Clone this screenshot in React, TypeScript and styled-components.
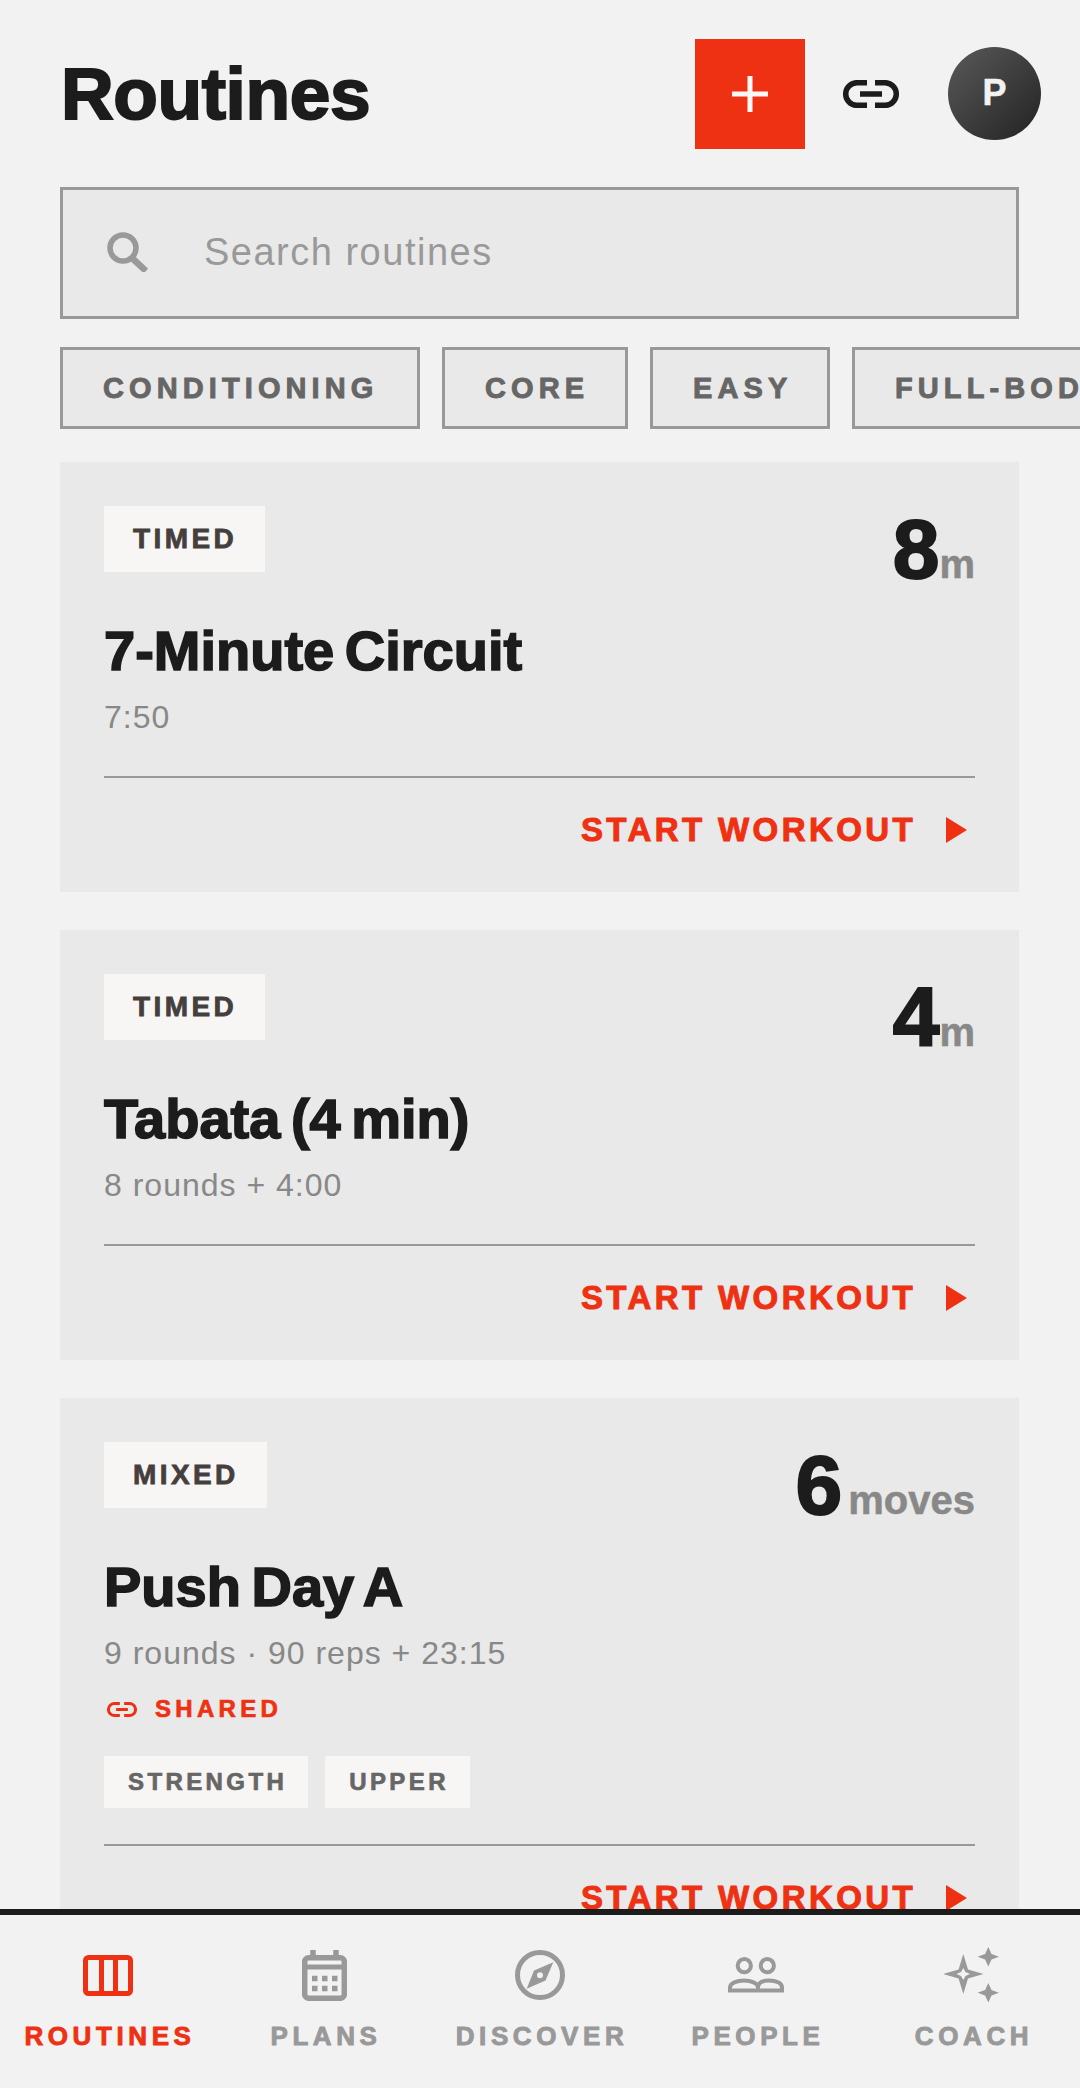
import React from 'react';
import styled, { createGlobalStyle } from 'styled-components';

const RED = '#ee3112';
const INK = '#1c1c1c';
const BOLD = `"Liberation Sans", Arial, sans-serif`;

const GlobalStyle = createGlobalStyle`
  html, body {
    margin: 0;
    padding: 0;
    background: #f2f2f2;
  }
  * {
    box-sizing: border-box;
  }
`;

const Page = styled.div`
  width: 1080px;
  height: 2088px;
  display: flex;
  flex-direction: column;
  overflow: hidden;
  background: #f2f2f2;
  font-family: ${BOLD};
  color: ${INK};
`;

const Scroll = styled.main`
  flex: 1;
  min-height: 0;
  overflow: hidden;
`;

const Header = styled.header`
  display: flex;
  align-items: center;
  height: 110px;
  margin-top: 39px;
  padding: 0 39px 0 61px;
`;

const Title = styled.h1`
  flex: 1;
  margin: -2px 0 0;
  font-size: 73px;
  font-weight: 700;
  letter-spacing: -0.4px;
  -webkit-text-stroke: 2px ${INK};
`;

const AddButton = styled.button`
  width: 110px;
  height: 110px;
  display: flex;
  align-items: center;
  justify-content: center;
  border: 0;
  padding: 0;
  background: ${RED};
`;

const LinkButton = styled.div`
  display: flex;
  margin: 0 49px 0 38px;
  color: ${INK};
`;

const Avatar = styled.div`
  width: 93px;
  height: 93px;
  margin-bottom: 2px;
  display: flex;
  align-items: center;
  justify-content: center;
  border-radius: 50%;
  background: linear-gradient(135deg, #5a5a5a, #222);
  color: #f2f2f2;
  font-size: 36px;
  font-weight: 700;
  -webkit-text-stroke: 0.5px #f2f2f2;
`;

const SearchBox = styled.div`
  display: flex;
  align-items: center;
  height: 132px;
  margin: 38px 61px 0 60px;
  padding: 0 0 2px 44px;
  border: 3px solid #999;
  background: #e9e9e9;
  color: #999;
`;

const Placeholder = styled.span`
  margin-left: 56px;
  font-size: 38px;
  letter-spacing: 1.5px;
`;

const Chips = styled.div`
  display: flex;
  gap: 22px;
  margin-top: 28px;
  padding-left: 60px;
  white-space: nowrap;
`;

const Chip = styled.div<{ $width?: number }>`
  flex: none;
  width: ${(p) => (p.$width ? `${p.$width}px` : 'auto')};
  height: 82px;
  display: flex;
  align-items: center;
  padding-left: 40px;
  border: 3px solid #999;
  background: #e9e9e9;
  color: #666;
  font-size: 29px;
  font-weight: 700;
  letter-spacing: 5.1px;
  -webkit-text-stroke: 0.9px #666;
`;

const Cards = styled.div`
  display: flex;
  flex-direction: column;
  gap: 38px;
  margin: 33px 61px 0 60px;
`;

const Card = styled.article`
  padding: 44px 44px 0;
  background: #e9e9e9;
`;

const CardTop = styled.div`
  display: flex;
  justify-content: space-between;
  align-items: flex-start;
  height: 82px;
`;

const Kind = styled.span`
  height: 66px;
  display: flex;
  align-items: center;
  padding: 0 28px 0 29px;
  background: #f8f6f5;
  color: #443f3d;
  font-size: 28px;
  font-weight: 700;
  letter-spacing: 3.4px;
  -webkit-text-stroke: 0.8px #443f3d;
`;

const Stat = styled.div`
  display: flex;
  align-items: baseline;
  margin-top: 4px;
  line-height: 78px;
`;

const StatNum = styled.span`
  font-size: 84px;
  font-weight: 700;
  -webkit-text-stroke: 2px ${INK};
`;

const StatUnit = styled.span<{ $gap: number }>`
  margin-left: ${(p) => p.$gap}px;
  color: #888;
  font-size: 40px;
  font-weight: 700;
  -webkit-text-stroke: 0.5px #888;
`;

const CardTitle = styled.h2`
  margin: 31px 0 0;
  font-size: 56px;
  line-height: 64px;
  font-weight: 700;
  letter-spacing: 0;
  word-spacing: -5px;
  -webkit-text-stroke: 1.6px ${INK};
`;

const Meta = styled.div`
  margin-top: 15px;
  color: #888;
  font-size: 32px;
  line-height: 38px;
  letter-spacing: 1px;
`;

const Shared = styled.div`
  display: flex;
  align-items: center;
  gap: 18px;
  margin-top: 22px;
  padding-left: 3px;
  color: ${RED};
  font-size: 24px;
  line-height: 30px;
  font-weight: 700;
  letter-spacing: 4.3px;
  -webkit-text-stroke: 0.7px ${RED};
`;

const Tags = styled.div`
  display: flex;
  gap: 17px;
  margin: 32px 0 -4px;
`;

const Tag = styled.span`
  height: 52px;
  display: flex;
  align-items: center;
  padding: 0 21px 0 24px;
  background: #f8f6f5;
  color: #666;
  font-size: 24px;
  font-weight: 700;
  letter-spacing: 3.4px;
  -webkit-text-stroke: 0.7px #666;
`;

const CardFoot = styled.div`
  display: flex;
  align-items: center;
  justify-content: flex-end;
  height: 116px;
  margin-top: 40px;
  padding: 0 8px 10px 0;
  border-top: 2px solid #999;
  color: ${RED};
  font-size: 33px;
  font-weight: 700;
  letter-spacing: 3.4px;
  -webkit-text-stroke: 1px ${RED};
`;

const Arrow = styled.svg`
  margin-left: 30px;
`;

const Nav = styled.nav`
  flex: none;
  height: 179px;
  display: grid;
  grid-template-columns: repeat(5, 1fr);
  border-top: 6px solid ${INK};
  background: #f2f2f2;
`;

const NavItem = styled.div<{ $active?: boolean }>`
  display: flex;
  flex-direction: column;
  align-items: center;
  padding-top: 30px;
  color: ${(p) => (p.$active ? RED : '#999')};
`;

const NavIcon = styled.div`
  height: 60px;
  display: flex;
  align-items: center;
  justify-content: center;
`;

const NavLabel = styled.span`
  margin-top: 16px;
  padding-left: 4px;
  font-size: 26px;
  line-height: 30px;
  font-weight: 700;
  letter-spacing: 4.6px;
  -webkit-text-stroke: 0.9px currentColor;
`;

const LinkIcon = ({ width }: { width: number }) => (
  <svg width={width} height={width / 2} viewBox="0 0 56 28" fill="none" stroke="currentColor" strokeWidth="5.5">
    <path d="M24 2.7H14a11.3 11.3 0 0 0 0 22.6H24" />
    <path d="M32 2.7H42a11.3 11.3 0 0 1 0 22.6H32" />
    <path d="M17 14H39" />
  </svg>
);

const PlusIcon = () => (
  <svg width="36" height="36" viewBox="0 0 36 36" stroke="#fbf7f5" strokeWidth="5">
    <path d="M18 0v36M0 18h36" />
  </svg>
);

const SearchIcon = () => (
  <svg width="41" height="40" viewBox="0 0 41 40" fill="none" stroke="currentColor" strokeWidth="5.5">
    <circle cx="16" cy="16" r="13" />
    <path d="M25 26l14 13" strokeWidth="6.5" />
  </svg>
);

const RoutinesIcon = () => (
  <svg width="50" height="41" viewBox="0 0 50 41" fill="none" stroke="currentColor" strokeWidth="5">
    <rect x="2.5" y="2.5" width="45" height="36" rx="3" />
    <path d="M18.5 2v37M32.5 2v37" />
  </svg>
);

const PlansIcon = () => (
  <svg width="45" height="51" viewBox="0 0 45 51" fill="none" stroke="currentColor" strokeWidth="5.5">
    <rect x="2.7" y="7.7" width="39.6" height="40.6" rx="4" />
    <path d="M11 0v6M34 0v6" />
    <path d="M2 17h41" strokeWidth="5" />
    <path d="M10 28.5h5.5M20 28.5h5.5M30 28.5h5.5M10 38.5h5.5M20 38.5h5.5M30 38.5h5.5" />
  </svg>
);

const DiscoverIcon = () => (
  <svg width="50" height="50" viewBox="0 0 50 50" fill="none" stroke="currentColor" strokeWidth="5">
    <circle cx="25" cy="25" r="22.5" />
    <path d="M38.3 12.2L30.5 30.5L11.7 38.8L19 20.5z" fill="currentColor" stroke="none" />
    <circle cx="25" cy="25.3" r="3" fill="#f2f2f2" stroke="none" />
  </svg>
);

const PeopleIcon = () => (
  <svg width="56" height="36" viewBox="0 0 56 36" fill="none" stroke="currentColor" strokeWidth="4">
    <circle cx="16.3" cy="8.7" r="6.6" />
    <circle cx="39.3" cy="8.7" r="6.6" />
    <path d="M2 33.5v-3C2 26 9 23.5 16 23.5S30 26 30 30.5v3" />
    <path d="M30 30.5C30 26 34 23.5 41 23.5S54 26 54 30.5v3" />
    <path d="M0 33.5H56" />
  </svg>
);

const CoachIcon = () => (
  <svg width="56" height="56" viewBox="0 0 56 56" fill="currentColor">
    <path
      fillRule="evenodd"
      d="M19.3 7L24 22.5L39.5 27L24 31.5L19.3 47L14.6 31.5L-0.5 27L14.6 22.5ZM19.3 21L21.5 25L26 27L21.5 29L19.3 33L17 29L12.5 27L17 25Z"
    />
    <path d="M44.3 0L47.5 7L55 9.7L47.5 12.4L44.3 19.4L41.1 12.4L33.6 9.7L41.1 7Z" />
    <path d="M44.3 36L47.5 43L55 45.7L47.5 48.4L44.3 55.4L41.1 48.4L33.6 45.7L41.1 43Z" />
  </svg>
);

type Routine = {
  kind: string;
  num: string;
  unit: string;
  unitGap: number;
  title: string;
  meta: string;
  shared?: boolean;
  tags?: string[];
};

const chips = [
  { label: 'CONDITIONING', width: 360 },
  { label: 'CORE', width: 186 },
  { label: 'EASY', width: 180 },
  { label: 'FULL-BODY' },
];

const routines: Routine[] = [
  { kind: 'TIMED', num: '8', unit: 'm', unitGap: 0, title: '7-Minute Circuit', meta: '7:50' },
  { kind: 'TIMED', num: '4', unit: 'm', unitGap: 0, title: 'Tabata (4 min)', meta: '8 rounds + 4:00' },
  {
    kind: 'MIXED',
    num: '6',
    unit: 'moves',
    unitGap: 6,
    title: 'Push Day A',
    meta: '9 rounds · 90 reps + 23:15',
    shared: true,
    tags: ['STRENGTH', 'UPPER'],
  },
];

const tabs = [
  { label: 'ROUTINES', icon: <RoutinesIcon />, active: true },
  { label: 'PLANS', icon: <PlansIcon /> },
  { label: 'DISCOVER', icon: <DiscoverIcon /> },
  { label: 'PEOPLE', icon: <PeopleIcon /> },
  { label: 'COACH', icon: <CoachIcon /> },
];

export default function App() {
  return (
    <Page>
      <GlobalStyle />
      <Scroll>
        <Header>
          <Title>Routines</Title>
          <AddButton>
            <PlusIcon />
          </AddButton>
          <LinkButton>
            <LinkIcon width={56} />
          </LinkButton>
          <Avatar>P</Avatar>
        </Header>

        <SearchBox>
          <SearchIcon />
          <Placeholder>Search routines</Placeholder>
        </SearchBox>

        <Chips>
          {chips.map((c) => (
            <Chip key={c.label} $width={c.width}>
              {c.label}
            </Chip>
          ))}
        </Chips>

        <Cards>
          {routines.map((r) => (
            <Card key={r.title}>
              <CardTop>
                <Kind>{r.kind}</Kind>
                <Stat>
                  <StatNum>{r.num}</StatNum>
                  <StatUnit $gap={r.unitGap}>{r.unit}</StatUnit>
                </Stat>
              </CardTop>
              <CardTitle>{r.title}</CardTitle>
              <Meta>{r.meta}</Meta>
              {r.shared && (
                <Shared>
                  <LinkIcon width={30} />
                  SHARED
                </Shared>
              )}
              {r.tags && (
                <Tags>
                  {r.tags.map((t) => (
                    <Tag key={t}>{t}</Tag>
                  ))}
                </Tags>
              )}
              <CardFoot>
                START WORKOUT
                <Arrow width="21" height="26" viewBox="0 0 21 26">
                  <path d="M0 0l21 13L0 26z" fill="currentColor" />
                </Arrow>
              </CardFoot>
            </Card>
          ))}
        </Cards>
      </Scroll>

      <Nav>
        {tabs.map((t) => (
          <NavItem key={t.label} $active={t.active}>
            <NavIcon>{t.icon}</NavIcon>
            <NavLabel>{t.label}</NavLabel>
          </NavItem>
        ))}
      </Nav>
    </Page>
  );
}
